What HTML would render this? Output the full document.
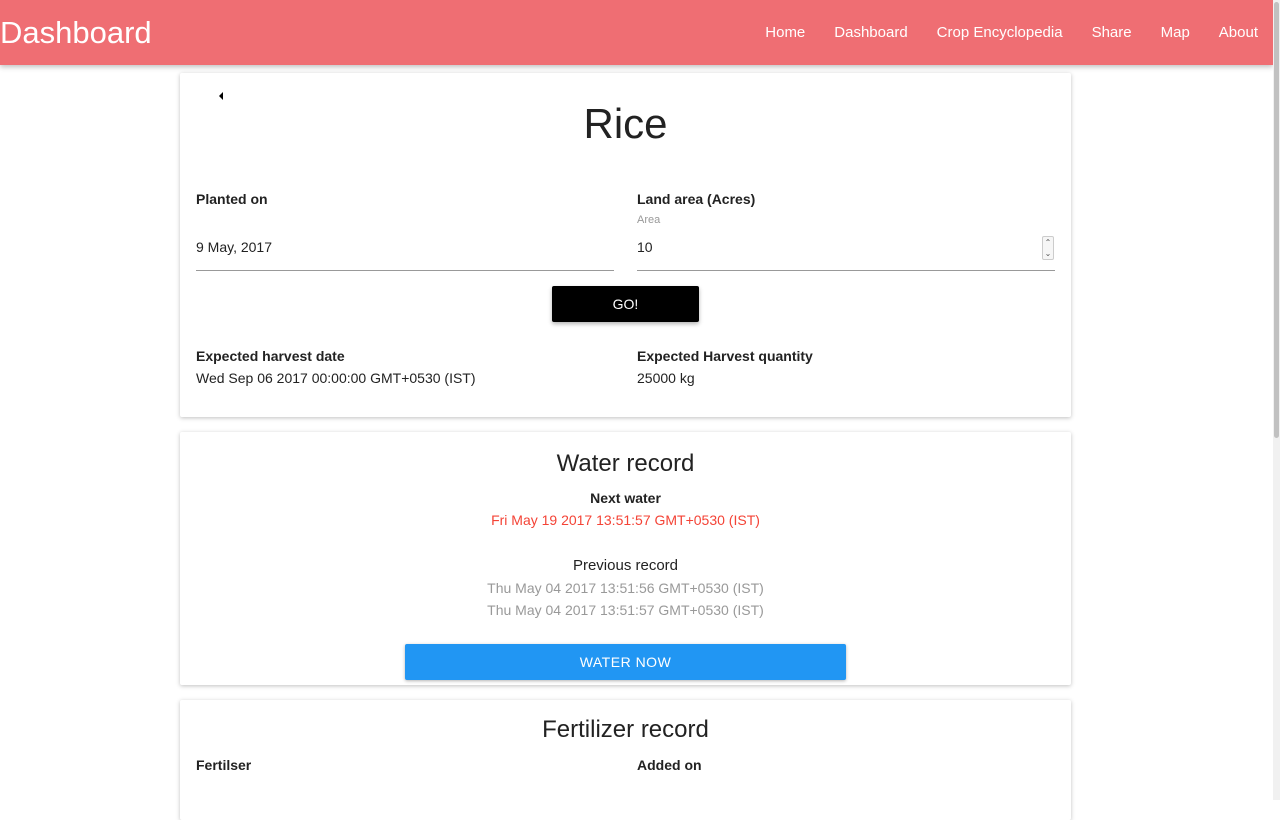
<!DOCTYPE html>
<html><head><style>
*{box-sizing:border-box}
body{margin:0;background:#fff;font-family:"Liberation Sans",sans-serif;color:#222;width:1280px;height:800px;overflow:hidden;position:relative}
.nav{position:absolute;left:0;top:0;width:1273px;height:65px;background:#ef6e73;box-shadow:0 2px 5px rgba(0,0,0,.25);color:#fff}
.nav .brand{position:absolute;left:0;top:15px;font-size:31px}
.nav .links{position:absolute;right:15px;top:24px;font-size:15px}
.nav .links span{margin-left:29px}
.sb{position:absolute;right:0;top:0;width:7px;height:800px;background:#f1f1f1}
.sb div{position:absolute;left:1px;top:2px;width:5px;height:436px;background:#c1c1c1;border-radius:3px}
.card{position:absolute;left:180px;width:891px;background:#fff;box-shadow:0 1px 4px rgba(0,0,0,.25);border-radius:2px}
.t{position:absolute;font-size:14px;white-space:nowrap}
.b{font-weight:bold}
.c{text-align:center;left:0;right:0}
.line{position:absolute;height:1px;background:#999}
</style></head><body>
<div class="nav"><div class="brand">Dashboard</div>
<div class="links"><span>Home</span><span>Dashboard</span><span>Crop Encyclopedia</span><span>Share</span><span>Map</span><span>About</span></div></div>
<div class="sb"><div></div></div>

<div class="card" style="top:73px;height:344px">
 <div style="position:absolute;left:39px;top:19px;width:0;height:0;border-top:4px solid transparent;border-bottom:4px solid transparent;border-right:4px solid #000"></div>
 <div class="t c" style="top:27px;font-size:42px;color:#222">Rice</div>
 <div class="t b" style="left:16px;top:118px">Planted on</div>
 <div class="t" style="left:16px;top:166px">9 May, 2017</div>
 <div class="line" style="left:16px;top:197px;width:418px"></div>
 <div class="t b" style="left:457px;top:118px">Land area (Acres)</div>
 <div class="t" style="left:457px;top:141px;font-size:11px;color:#999">Area</div>
 <div class="t" style="left:457px;top:166px">10</div>
 <div style="position:absolute;left:862px;top:163px;width:12px;height:24px;border:1px solid #ccc;border-radius:2px;background:#f6f6f6;font-size:8px;text-align:center;line-height:11px;color:#555">&#8963;<br>&#8964;</div>
 <div class="line" style="left:457px;top:197px;width:418px"></div>
 <div style="position:absolute;left:372px;top:213px;width:147px;height:36px;background:#000;color:#fff;font-size:14px;text-align:center;line-height:36px;box-shadow:0 2px 4px rgba(0,0,0,.3);border-radius:2px">GO!</div>
 <div class="t b" style="left:16px;top:275px">Expected harvest date</div>
 <div class="t" style="left:16px;top:297px">Wed Sep 06 2017 00:00:00 GMT+0530 (IST)</div>
 <div class="t b" style="left:457px;top:275px">Expected Harvest quantity</div>
 <div class="t" style="left:457px;top:297px">25000 kg</div>
</div>

<div class="card" style="top:432px;height:253px">
 <div class="t c" style="top:18px;font-size:24px">Water record</div>
 <div class="t c b" style="top:58px">Next water</div>
 <div class="t c" style="top:80px;color:#f44336">Fri May 19 2017 13:51:57 GMT+0530 (IST)</div>
 <div class="t c" style="top:125px;font-size:15px">Previous record</div>
 <div class="t c" style="top:148px;color:#999">Thu May 04 2017 13:51:56 GMT+0530 (IST)</div>
 <div class="t c" style="top:170px;color:#999">Thu May 04 2017 13:51:57 GMT+0530 (IST)</div>
 <div style="position:absolute;left:225px;top:212px;width:441px;height:36px;background:#2196f3;color:#fff;font-size:14px;text-align:center;line-height:36px;letter-spacing:.5px;border-radius:2px;box-shadow:0 1px 3px rgba(0,0,0,.3)">WATER NOW</div>
</div>

<div class="card" style="top:700px;height:120px">
 <div class="t c" style="top:16px;font-size:24px">Fertilizer record</div>
 <div class="t b" style="left:16px;top:57px">Fertilser</div>
 <div class="t b" style="left:457px;top:57px">Added on</div>
</div>
</body></html>
